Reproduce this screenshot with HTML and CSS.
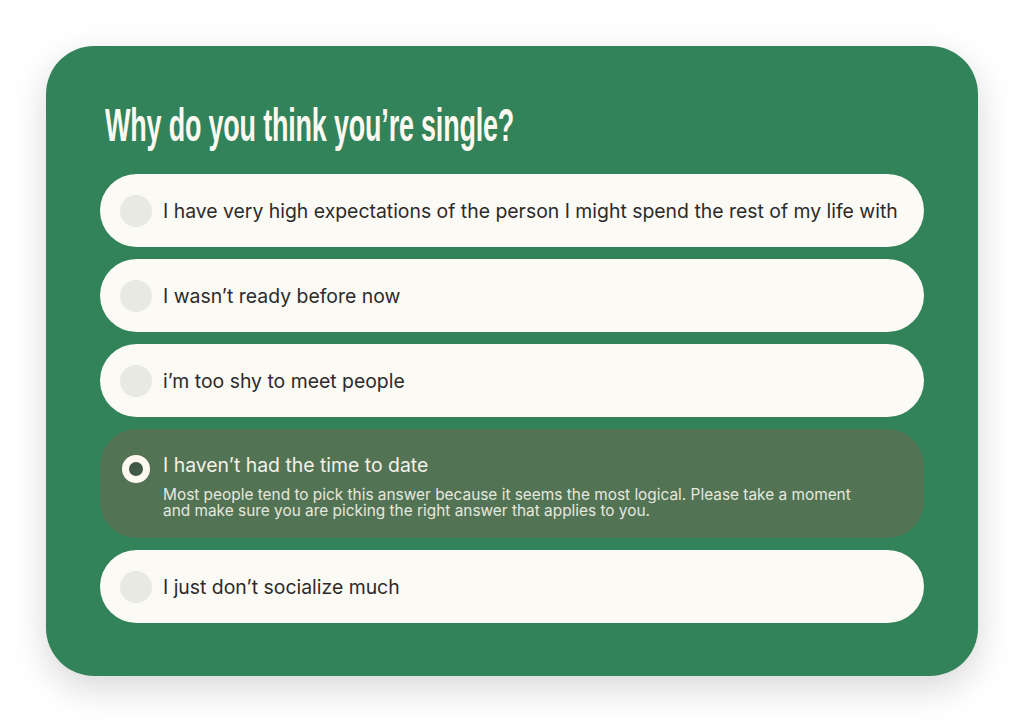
FILE: index.html
```html
<!DOCTYPE html>
<html>
<head>
<meta charset="utf-8">
<link rel="stylesheet" href="styles.css">
</head>
<body>
<div class="card">
  <h1 class="title"><span class="title-text">Why do you think you’re single?</span></h1>
  <div class="options">
    <div class="option"><span class="radio"></span><span class="label">I have very high expectations of the person I might spend the rest of my life with</span></div>
    <div class="option"><span class="radio"></span><span class="label">I wasn’t ready before now</span></div>
    <div class="option"><span class="radio"></span><span class="label">i’m too shy to meet people</span></div>
    <div class="option selected">
      <span class="radio"></span>
      <div class="body">
        <span class="label">I haven’t had the time to date</span>
        <p class="desc">Most people tend to pick this answer because it seems the most logical. Please take a moment and make sure you are picking the right answer that applies to you.</p>
      </div>
    </div>
    <div class="option"><span class="radio"></span><span class="label">I just don’t socialize much</span></div>
  </div>
</div>
</body>
</html>
```

FILE: styles.css
```css
html, body { margin: 0; padding: 0; background: #ffffff; }
body { width: 1024px; height: 724px; overflow: hidden; }
.card {
  margin: 46px 0 0 46px;
  width: 932px;
  height: 630px;
  box-sizing: border-box;
  padding: 55px 54px 53px 54px;
  background: #33835a;
  border-radius: 48px;
  box-shadow: 0 12px 36px rgba(0,0,0,0.16);
}
.title {
  margin: 0 0 0 5px;
  height: 73px;
  font-family: "Liberation Sans", Arial, sans-serif;
  font-weight: 700;
  font-size: 47px;
  line-height: 48px;
  color: #fdf9f1;
  white-space: nowrap;
}
.title-text {
  display: inline-block;
  transform: scaleX(0.573);
  transform-origin: left center;
  letter-spacing: -0.3px;
}
.options { display: flex; flex-direction: column; gap: 12px; }
.option {
  display: flex;
  align-items: center;
  height: 73px;
  box-sizing: border-box;
  padding: 0 20px;
  background: #fcfaf4;
  border-radius: 37px;
  font-family: Inter, "Liberation Sans", sans-serif;
}
.radio {
  flex: none;
  width: 32px; height: 32px;
  border-radius: 50%;
  background: #e8e9e2;
  margin-right: 11px;
}
.label { font-size: 19.4px; line-height: 22px; color: #2b2b2b; }
.option.selected {
  height: 109px;
  align-items: flex-start;
  padding-top: 25px;
  background: #537355;
}
.option.selected .radio {
  width: 14px; height: 14px;
  margin: 1px 13px 0 2px;
  background: #3f5a44;
  border: 7px solid #fdf9f1;
}
.option.selected .label { color: #f3f1e8; }
.desc {
  margin: 11px 0 0 0;
  font-size: 15.4px;
  line-height: 16px;
  color: #e6e8de;
  max-width: 705px;
}
```
